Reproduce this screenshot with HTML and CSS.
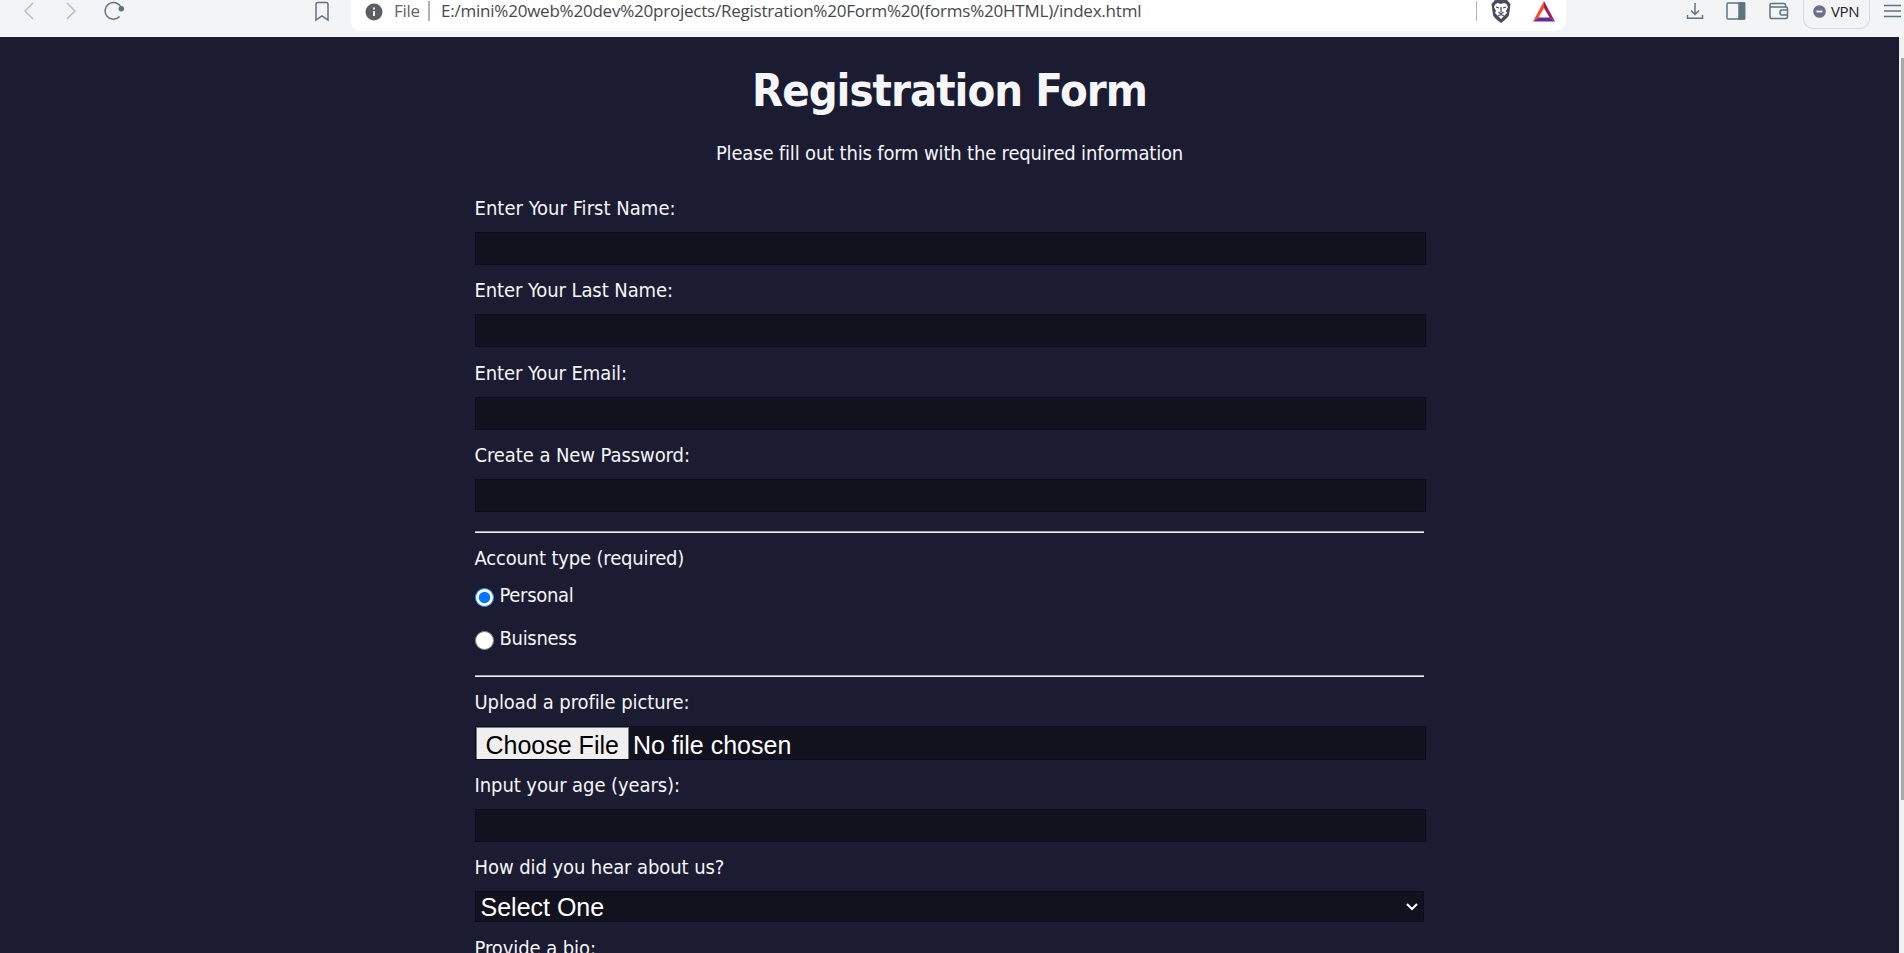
FILE: index.html
```html
<!DOCTYPE html>
<html lang="en">
<head>
<meta charset="utf-8">
<title>Registration Form</title>
<link rel="stylesheet" href="styles.css">
</head>
<body>
<header class="toolbar">
  <div class="nav">
    <svg class="faded" width="10" height="20" viewBox="0 0 10 20"><path d="M9 3 1 11l8 8"/></svg>
    <svg class="faded" width="10" height="20" viewBox="0 0 10 20"><path d="M1 3l8 8-8 8"/></svg>
    <svg class="reload" width="22" height="20" viewBox="0 0 22 20"><path d="M15.6 16.6A8.4 8.4 0 1 1 17 7"/><circle cx="17.3" cy="8.8" r="2" fill="#5e7581"/></svg>
    <svg class="bookmark" width="16" height="22" viewBox="0 0 16 22"><path d="M2 4.500Q2 2.500 4 2.500h8q2 0 2 2V20l-6-4-6 4z"/></svg>
  </div>
  <div class="address">
    <svg class="info" width="18" height="18" viewBox="0 0 18 18"><circle cx="9" cy="9" r="8.500" fill="#5b5e62"/><path d="M9 8v5M9 4.500v2" stroke="#fff" stroke-width="1.800"/></svg>
    <span class="scheme">File</span>
    <span class="divider"></span>
    <span class="url">E:/mini%20web%20dev%20projects/Registration%20Form%20(forms%20HTML)/index.html</span>
    <span class="divider end"></span>
    <svg class="lion" width="20" height="23" viewBox="0 0 20 23"><path d="M4 0h12l3.500 4-1.500 11q-1 3-8 8-7-5-8-8L.5 4z" fill="#4b4b5d"/><path d="M4.500 4 7 3l3 1 3-1 2.500 1 1.500 3-2 4 1 2-3 3-3 3-3-3-3-3 1-2-2-4z" fill="#fff"/><path d="M5 7l3 1M15 7l-3 1M10 7v5M7.500 12 10 14l2.500-2M7 16l3-1.500 3 1.500" stroke="#4b4b5d" stroke-width="1.300" fill="none"/></svg>
    <svg class="bat" width="22" height="21" viewBox="0 0 22 21"><path d="M11 0v7L5.500 16.500 0 20.500z" fill="#ff4724"/><path d="M11 0l11 20.500-5.500-4L11 7z" fill="#9e1f63"/><path d="M0 20.500l5.500-4h11l5.500 4z" fill="#662d91"/></svg>
  </div>
  <div class="actions">
    <svg class="download" width="18" height="18" viewBox="0 0 18 18"><path d="M9 1v11M5 8.500l4 4 4-4M1.500 13v3.200h15V13"/></svg>
    <svg class="panel" width="20" height="18" viewBox="0 0 20 18"><rect x="1" y="1" width="17.500" height="16" rx="1"/><path d="M13 1h5.500v16H13z" fill="#5e7581"/></svg>
    <svg class="wallet" width="20" height="18" viewBox="0 0 20 18"><path d="M16.500 5V3q0-1.500-1.500-1.500H2.500Q1 1.500 1 3v12q0 1.500 1.500 1.500H17q1.500 0 1.500-1.500V6.500Q18.500 5 17 5H2.500Q1 5 1 3.500M18.500 8H13q-2 0-2 2.500T13 13h5.500"/></svg>
    <div class="vpn">
      <svg width="13" height="13" viewBox="0 0 13 13"><circle cx="6.500" cy="6.500" r="6.300" fill="#6b6f91"/><path d="M3.500 6.500h6" stroke="#fff" stroke-width="1.800"/></svg>
      <span class="vpn-text">VPN</span>
    </div>
    <svg class="menu" width="17" height="14" viewBox="0 0 17 14"><path d="M0 1.500h17M0 7h17M0 12.500h17"/></svg>
  </div>
</header>
<div class="viewport">
  <main class="page">
    <h1>Registration Form</h1>
    <p class="intro">Please fill out this form with the required information</p>
    <form>
      <div class="field first"><label for="first">Enter Your First Name:</label><input id="first" type="text"></div>
      <div class="field"><label for="last">Enter Your Last Name:</label><input id="last" type="text"></div>
      <div class="field"><label for="email">Enter Your Email:</label><input id="email" type="email"></div>
      <div class="field"><label for="password">Create a New Password:</label><input id="password" type="password"></div>
      <fieldset>
        <legend>Account type (required)</legend>
        <label class="choice"><input type="radio" name="account" checked><span>Personal</span></label>
        <label class="choice"><input type="radio" name="account"><span>Buisness</span></label>
      </fieldset>
      <div class="field"><label for="picture">Upload a profile picture:</label><input id="picture" type="file"></div>
      <div class="field"><label for="age">Input your age (years):</label><input id="age" type="text"></div>
      <div class="field source"><label for="source">How did you hear about us?</label>
        <div class="select-wrap"><select id="source"><option>Select One</option></select>
        <svg class="chevron" width="12" height="8" viewBox="0 0 12 8"><path d="M1 1l5 5 5-5"/></svg></div></div>
      <div class="field"><label>Provide a bio:</label></div>
    </form>
  </main>
  <div class="scrollbar"><div class="thumb"></div></div>
</div>
</body>
</html>
```
FILE: styles.css
```css
* { box-sizing: border-box; }
body {
  margin: 0;
  height: 953px;
  overflow: hidden;
  display: flex;
  flex-direction: column;
  background: #1b1b32;
  color: #f5f6f7;
  font-family: "DejaVu Sans Condensed", "DejaVu Sans", sans-serif;
  font-stretch: condensed;
}
svg { display: block; flex: none; }

.toolbar {
  flex: none;
  height: 37px;
  display: flex;
  background: #f3f4f6;
  font-family: "Open Sans", sans-serif;
  font-stretch: normal;
}
.nav, .actions { display: flex; align-items: flex-start; }
.nav { width: 351px; padding-left: 24px; }
.nav svg, .actions > svg { fill: none; stroke: #5e7581; stroke-width: 1.5; }
.nav .faded { stroke: #b3bdc3; margin-right: 32px; }
.nav .reload { margin-left: -4px; }
.nav .bookmark { margin-left: 188px; }
.address {
  width: 1215px;
  height: 31px;
  display: flex;
  align-items: flex-start;
  padding-left: 14px;
  background: #fff;
  border-radius: 0 0 10px 10px;
}
.info { margin-top: 3px; }
.scheme { width: 34px; margin-left: 11px; font-size: 17px; line-height: 22px; letter-spacing: -0.3px; color: #5f6368; white-space: nowrap; }
.divider { width: 2px; height: 20px; margin-top: 1px; background: #b0b2b5; }
.url { width: 1035px; margin-left: 11px; font-size: 17px; line-height: 22px; letter-spacing: -0.225px; color: #46494d; white-space: nowrap; }
.divider.end { width: 1px; }
.lion { margin-left: 14px; }
.bat { margin: 1px 0 0 22px; }
.actions { flex: 1; padding-left: 120px; }
.download { margin-top: 2px; }
.panel { margin: 2px 0 0 22px; }
.wallet { margin: 2px 0 0 23px; }
.vpn {
  width: 67px;
  height: 29px;
  margin-left: 14px;
  padding: 0 0 6px 9px;
  display: flex;
  align-items: center;
  gap: 5px;
  border: 1px solid #d3dbe1;
  border-top: 0;
  border-radius: 0 0 10px 10px;
  font-size: 15px;
  letter-spacing: -0.4px;
  color: #1f2226;
}
.menu { margin: 4px 0 0 14px; }

.viewport { flex: 1; min-height: 0; display: flex; }
.page { flex: 1; min-width: 0; overflow: hidden; }
h1 { margin: 26px 0 0; height: 60px; font-size: 45px; line-height: 56px; letter-spacing: -1px; text-align: center; white-space: nowrap; }
.intro { margin: 16px 0 0; height: 28px; font-size: 20px; line-height: 28px; letter-spacing: -0.17px; text-align: center; }
form { width: 952px; margin: 27px 0 0 474.5px; font-size: 20px; letter-spacing: -0.08px; }
.field { height: 82.33px; }
.field > label, legend { display: block; height: 28px; padding: 0; line-height: 28px; white-space: nowrap; }
.first > label { letter-spacing: 0.03px; }
.field > input, select {
  display: block;
  width: 951px;
  height: 33px;
  margin: 10px 0 0;
  padding: 0 1px;
  border: 1px solid #0a0a23;
  border-radius: 0;
  outline: 0;
  background: #12111e;
  color: #fff;
  font: 25px "Liberation Sans", sans-serif;
}
fieldset {
  width: 949.5px;
  height: 146px;
  margin: 8px 0 11px;
  padding: 11px 0 0;
  border: solid #a5a6aa;
  border-width: 1px 0;
  box-shadow: inset 0 1px #f0f0f0, 0 1px #f0f0f0;
}
fieldset { height: 145px; padding-top: 12px; margin-bottom: 12px; }
legend { float: left; width: 100%; letter-spacing: -0.17px; }
.choice { clear: both; height: 43px; display: flex; line-height: 28px; padding-top: 9px; letter-spacing: -0.3px; }
.choice input { width: 19px; height: 19px; margin: 7px 6px 0 0; }
.field > input[type="file"] { height: 34px; padding: 0; overflow: hidden; }
input::file-selector-button {
  height: 36px;
  margin: 0 4px 0 0;
  padding: 0 9px;
  border: 1px solid #777;
  background: #efefef;
  color: #000;
  font: 25px "Liberation Sans", sans-serif;
}
.source { height: 81px; }
.select-wrap { position: relative; width: 949px; }
select { width: 949px; height: 31px; padding: 1px 5px 0; appearance: none; }
.chevron { position: absolute; right: 6px; top: 12px; fill: none; stroke: #fff; stroke-width: 2; }
.scrollbar { width: 5px; padding: 21px 0 0 2px; background: #f1f1f1; }
.thumb { height: 742px; background: #a8a8a8; }
```
